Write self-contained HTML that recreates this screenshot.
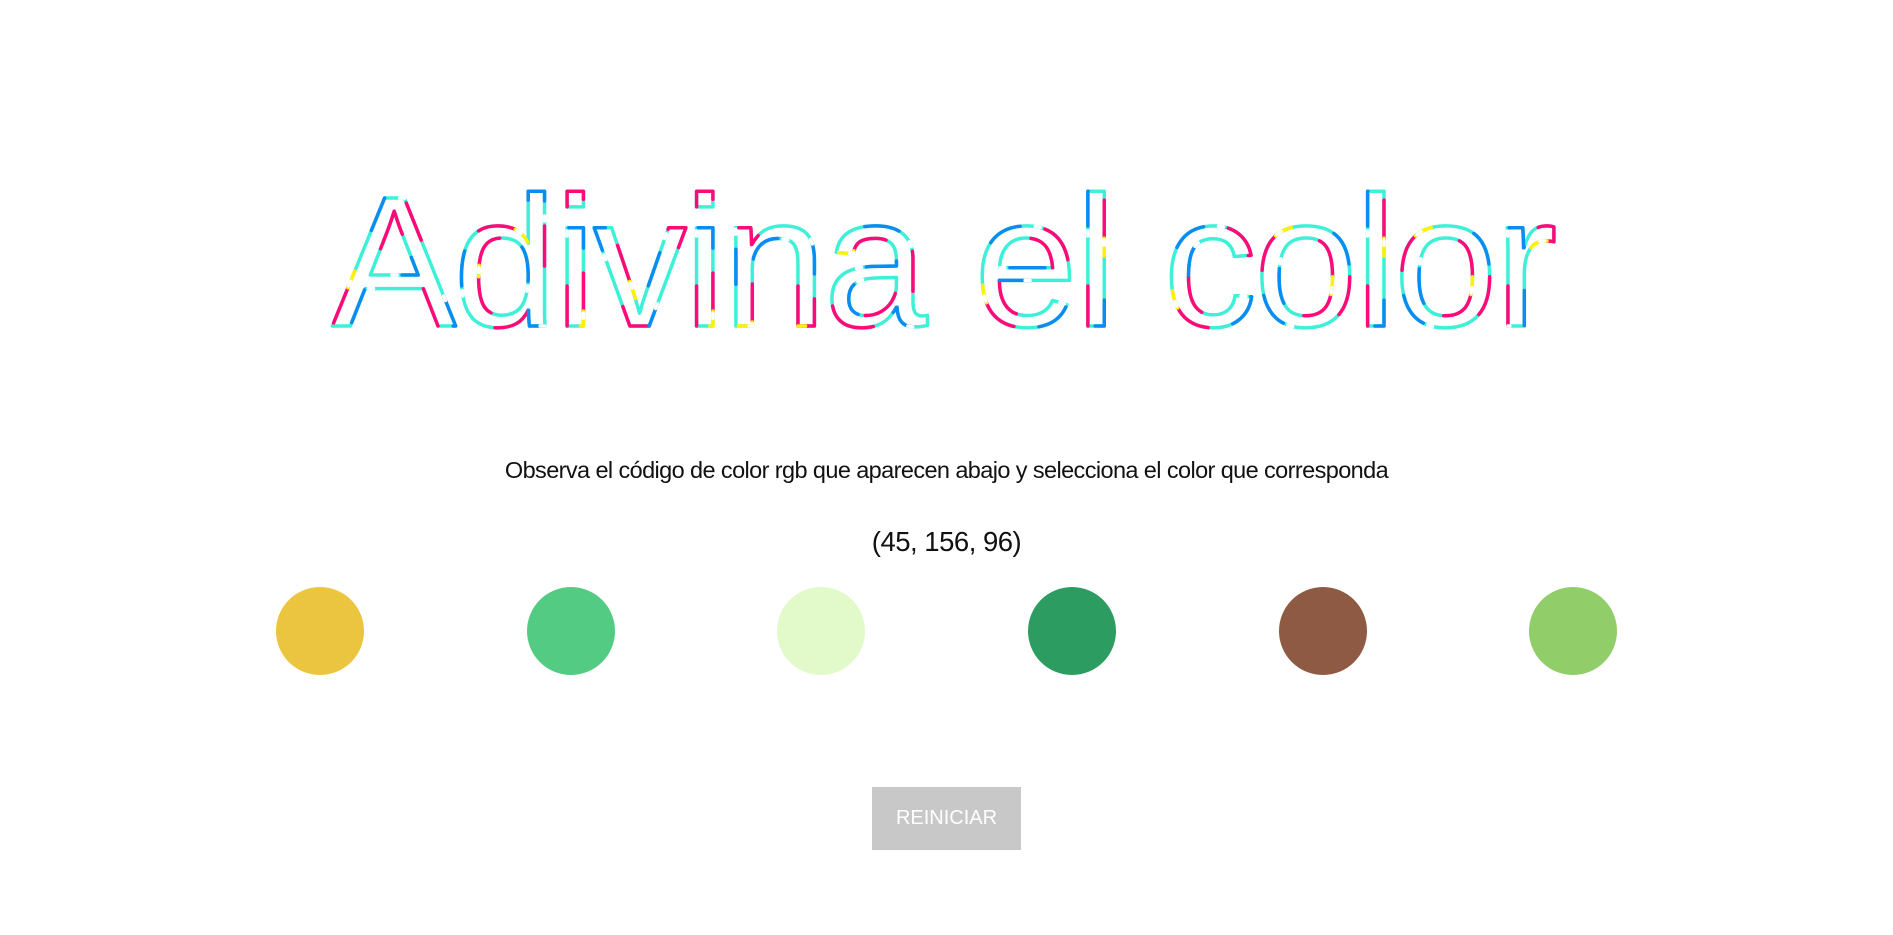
<!DOCTYPE html>
<html><head><meta charset="utf-8">
<style>
html,body{margin:0;padding:0;background:#fff;width:1893px;height:935px;overflow:hidden;font-family:"Liberation Sans",sans-serif;}
.sub{position:absolute;left:0;width:1893px;top:457px;text-align:center;font-size:23.5px;color:#111;letter-spacing:-0.6px;}
.rgb{position:absolute;left:0;width:1893px;top:526px;text-align:center;font-size:27.5px;color:#111;letter-spacing:-0.5px;}
.c{position:absolute;top:587px;width:88px;height:88px;border-radius:50%;}
.btn{position:absolute;left:872px;top:787px;width:149px;height:63px;background:#c8c8c8;color:#fff;font-size:20px;line-height:63px;text-align:center;}
svg text{font-family:"Liberation Sans",sans-serif;font-size:186px;fill:none;stroke-width:3.5;stroke-linecap:round;stroke-linejoin:round;}
</style></head><body>
<svg width="1893" height="360" style="position:absolute;left:0;top:0">
<g>
<text x="332" y="326" textLength="1225" lengthAdjust="spacing" stroke="#3ff0d8">Adivina el color</text>
<text x="332" y="326" textLength="1225" lengthAdjust="spacing" stroke="#ff0a78" stroke-dasharray="40 120" stroke-dashoffset="0">Adivina el color</text>
<text x="332" y="326" textLength="1225" lengthAdjust="spacing" stroke="#0a8cf0" stroke-dasharray="35 125" stroke-dashoffset="60">Adivina el color</text>
<text x="332" y="326" textLength="1225" lengthAdjust="spacing" stroke="#fff200" stroke-dasharray="18 300" stroke-dashoffset="120">Adivina el color</text>
<text x="332" y="326" textLength="1225" lengthAdjust="spacing" stroke="#fff" stroke-width="5" stroke-linecap="butt" stroke-dasharray="5 105" stroke-dashoffset="20">Adivina el color</text>
</g>
</svg>
<div class="sub">Observa el código de color rgb que aparecen abajo y selecciona el color que corresponda</div>
<div class="rgb">(45, 156, 96)</div>
<div class="c" style="left:276px;background:#ebc53f"></div>
<div class="c" style="left:527px;background:#54cb82"></div>
<div class="c" style="left:777px;background:#e2f9c9"></div>
<div class="c" style="left:1028px;background:#2d9c60"></div>
<div class="c" style="left:1279px;background:#8e5a43"></div>
<div class="c" style="left:1529px;background:#91ce6a"></div>
<div class="btn">REINICIAR</div>
</body></html>
